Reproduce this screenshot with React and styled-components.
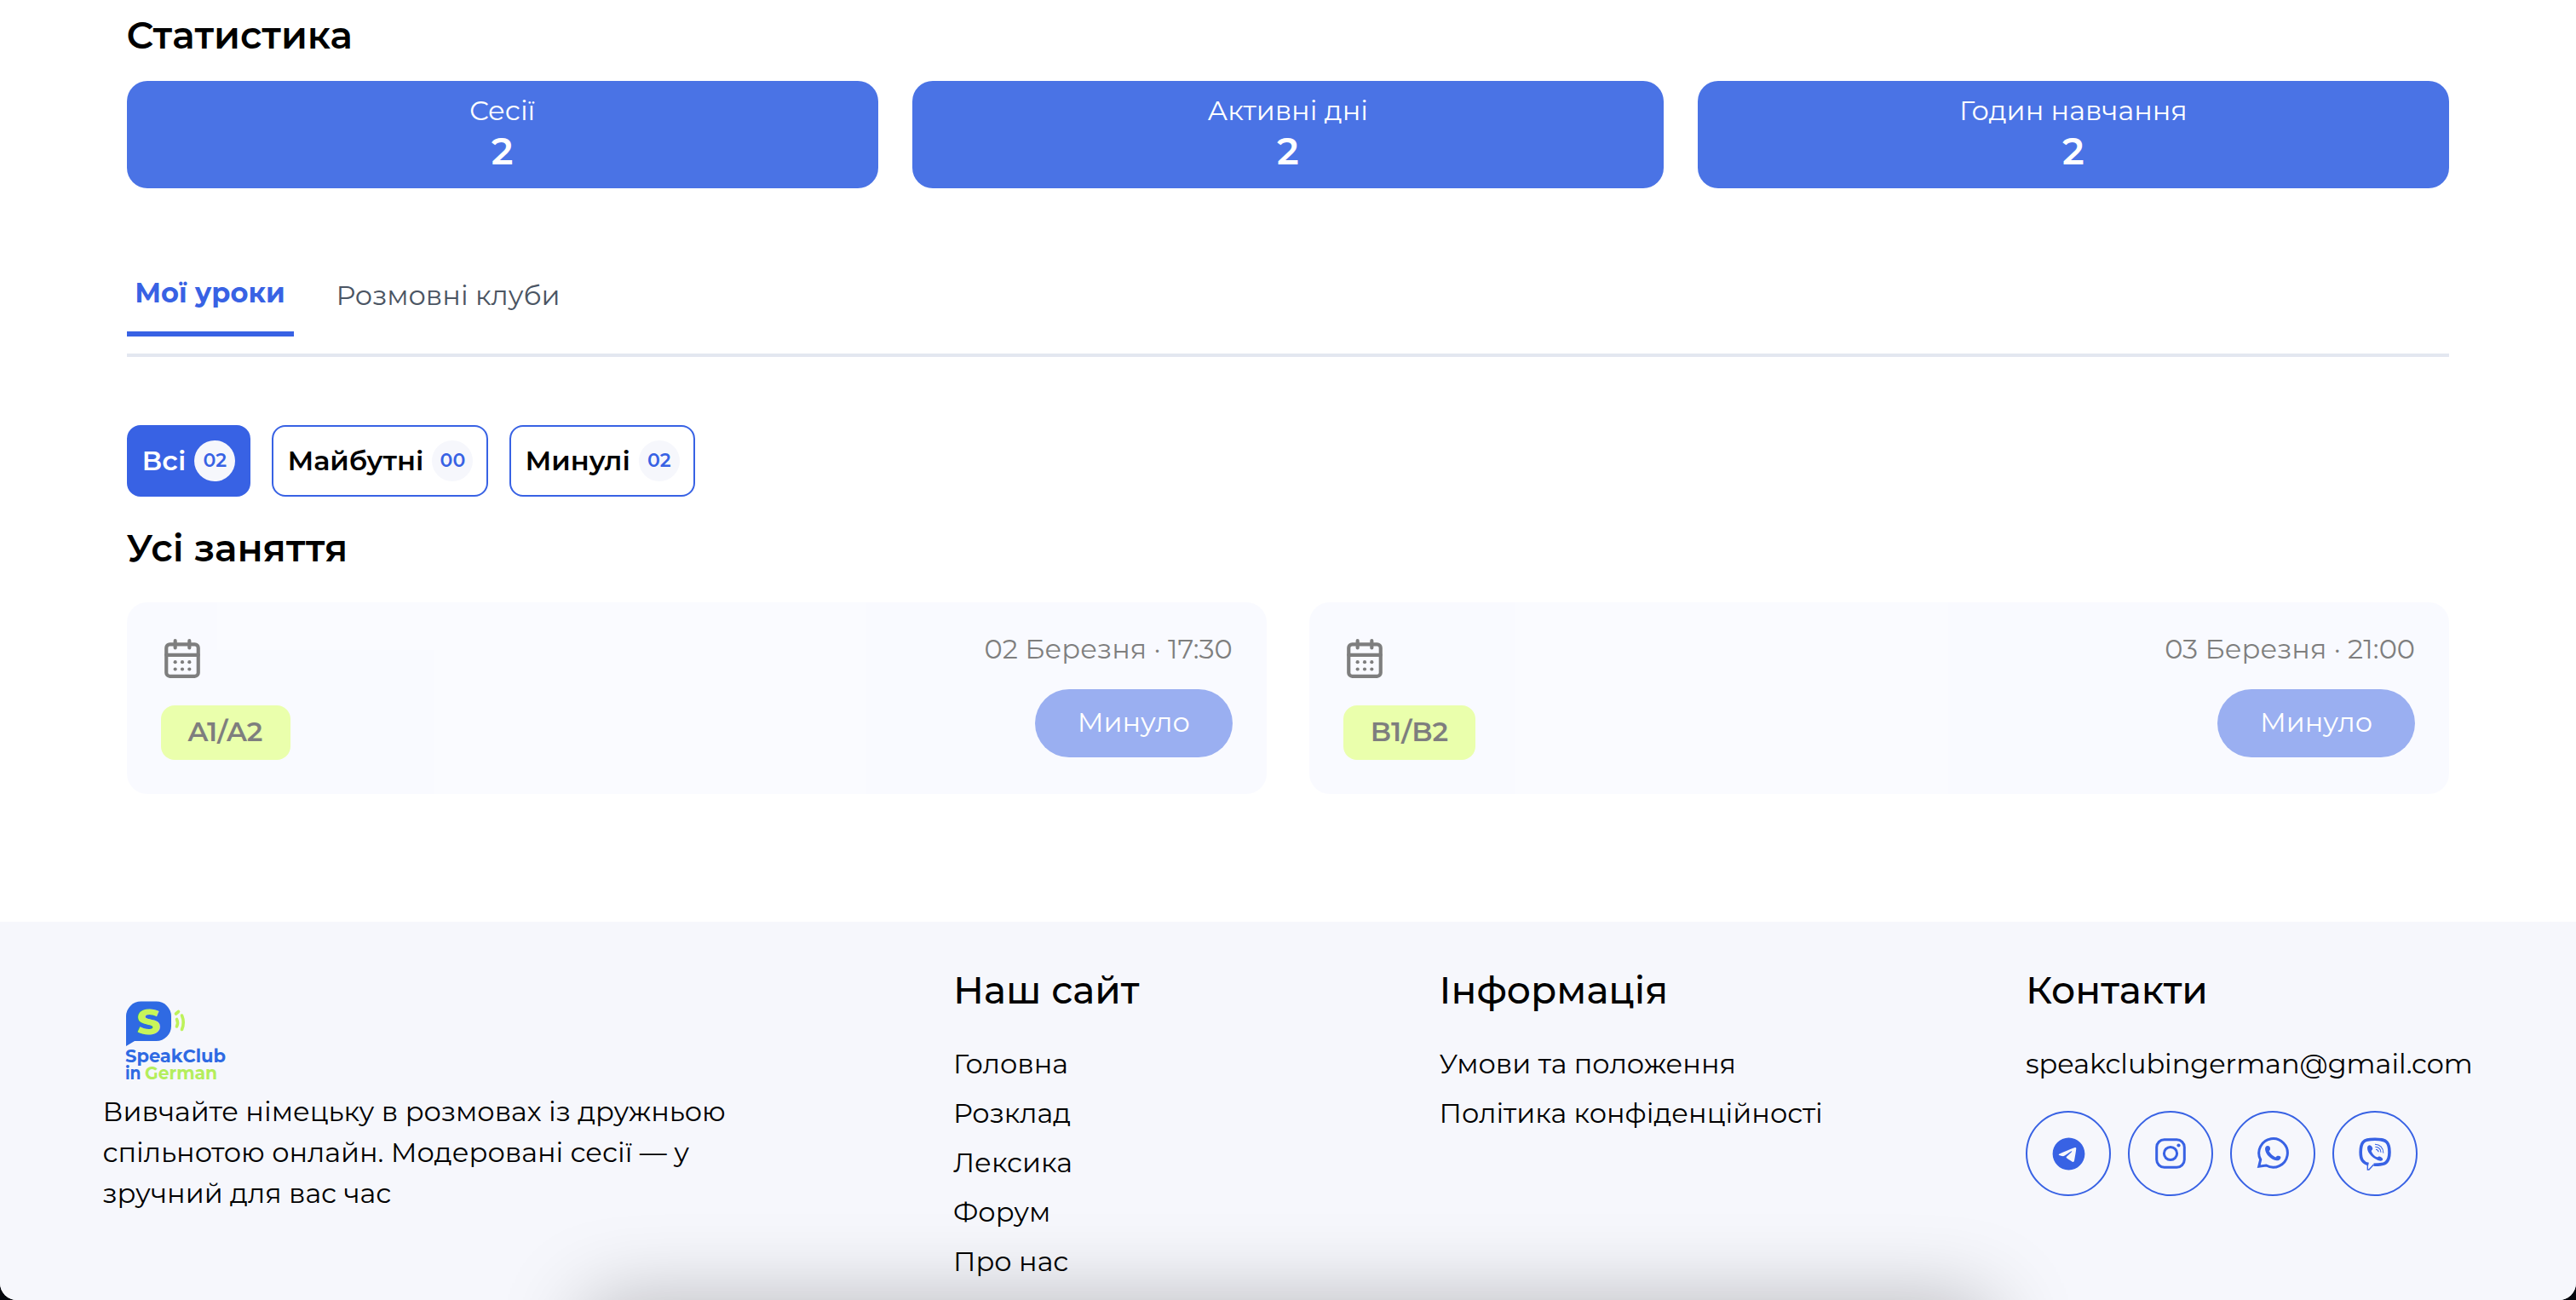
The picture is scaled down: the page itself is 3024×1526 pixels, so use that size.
import React from 'react';
import styled, { createGlobalStyle } from 'styled-components';
import { FaTelegram } from 'react-icons/fa6';

const GlobalStyle = createGlobalStyle`
  * {
    box-sizing: border-box;
    margin: 0;
    padding: 0;
  }
  body {
    background: #05070d;
    font-family: Montserrat, Inter, 'Noto Sans', sans-serif;
    font-size: 32px;
    color: #000;
    overflow: hidden;
  }
  ul {
    list-style: none;
  }
  a {
    color: inherit;
    text-decoration: none;
  }
  button {
    font: inherit;
    color: inherit;
    background: none;
    border: none;
  }
`;

const Page = styled.div`
  height: 1526px;
  display: flex;
  flex-direction: column;
  background: #fff;
  border-radius: 0 0 20px 20px;
  overflow: hidden;
  position: relative;
`;

const Main = styled.main`
  height: 1082px;
  flex-shrink: 0;
  padding: 13px 149px 0 148.5px;
`;

const Title = styled.h2`
  font-size: 44px;
  font-weight: 600;
  line-height: 56px;
`;

const Stats = styled.div`
  display: grid;
  grid-template-columns: repeat(3, 1fr);
  gap: 40px;
  margin-top: 26px;
`;

const StatCard = styled.div`
  height: 126px;
  padding-top: 12px;
  border-radius: 24px;
  background: #4a73e5;
  color: #fff;
  text-align: center;
  p {
    line-height: 46px;
  }
  strong {
    display: block;
    font-size: 44px;
    font-weight: 600;
    line-height: 49px;
  }
`;

const Tabs = styled.div`
  display: flex;
  align-items: flex-start;
  height: 120px;
  margin-top: 78px;
  border-bottom: 4px solid #e3e7f0;
`;

const Tab = styled.button`
  height: ${({ $active }) => ($active ? 96 : 100)}px;
  width: ${({ $active }) => ($active ? '196px' : 'auto')};
  margin-right: 50px;
  padding-top: ${({ $active }) => ($active ? 22 : 25)}px;
  display: flex;
  align-items: flex-start;
  justify-content: center;
  line-height: 46px;
  white-space: nowrap;
  font-weight: ${({ $active }) => ($active ? 700 : 400)};
  color: ${({ $active }) => ($active ? '#3862e4' : '#4b5563')};
  border-bottom: ${({ $active }) => ($active ? '6px solid #3862e4' : 'none')};
`;

const Filters = styled.div`
  display: flex;
  gap: 25px;
  margin: 80px 0 32px;
`;

const Filter = styled.button`
  height: 84px;
  padding: 0 16px;
  display: flex;
  align-items: center;
  gap: 10px;
  border: 2px solid #3862e4;
  border-radius: 16px;
  font-weight: 600;
  line-height: 46px;
  background: ${({ $active }) => ($active ? '#3862e4' : '#fff')};
  color: ${({ $active }) => ($active ? '#fff' : '#000')};
`;

const Count = styled.span`
  width: 48px;
  height: 48px;
  border-radius: 50%;
  display: flex;
  align-items: center;
  justify-content: center;
  font-size: 22px;
  font-weight: 600;
  background: #f6f7fc;
  color: #3862e4;
`;

const Lessons = styled.div`
  display: grid;
  grid-template-columns: repeat(2, 1fr);
  gap: 50px;
  margin-top: 36px;
`;

const LessonCard = styled.article`
  height: 225px;
  padding: 40px;
  display: flex;
  justify-content: space-between;
  border-radius: 24px;
  background: #f5f7ff;
  opacity: 0.5;
`;

const LessonLeft = styled.div`
  display: flex;
  flex-direction: column;
  align-items: flex-start;
  svg {
    display: block;
    margin: 1px 0 30px;
  }
`;

const LessonRight = styled.div`
  display: flex;
  flex-direction: column;
  align-items: flex-end;
  gap: 32px;
  time {
    line-height: 30px;
  }
`;

const Level = styled.span`
  height: 64px;
  padding: 0 32px 3px;
  display: flex;
  align-items: center;
  border-radius: 16px;
  background: #d6ff5b;
  font-weight: 600;
`;

const PastButton = styled.button`
  width: 232px;
  height: 80px;
  padding-bottom: 3px;
  border-radius: 40px;
  background: #3862e4;
  color: #fff;
`;

const Footer = styled.footer`
  flex: 1;
  padding: 54px 0 0 120.5px;
  display: flex;
  align-items: flex-start;
  background: #f6f7fc;
`;

const FooterColumn = styled.div`
  width: ${({ $width }) => $width}px;
  flex-shrink: 0;
  h3 {
    font-size: 44px;
    font-weight: 500;
    line-height: 52px;
    margin-bottom: 32px;
  }
  li {
    line-height: 58px;
    white-space: nowrap;
  }
`;

const Brand = styled.div`
  width: 998.5px;
  flex-shrink: 0;
  padding-top: 37px;
  svg {
    display: block;
    margin-left: 25.5px;
  }
  p {
    width: 760px;
    margin-top: 8px;
    line-height: 48px;
  }
`;

const Socials = styled.div`
  display: flex;
  gap: 20px;
  margin-top: 26px;
`;

const SocialLink = styled.a`
  width: 100px;
  height: 100px;
  display: flex;
  align-items: center;
  justify-content: center;
  border: 2px solid #3862e4;
  border-radius: 50%;
  color: #3862e4;
`;

const DockShadow = styled.div`
  position: absolute;
  left: 690px;
  right: 690px;
  top: 1530px;
  height: 120px;
  box-shadow: 0 0 100px rgba(0, 0, 0, 0.28);
`;

const CalendarIcon = () => (
  <svg width="50" height="50" viewBox="0 0 24 24" fill="none" stroke="#000" strokeWidth="2">
    <rect x="3" y="4" width="18" height="18" rx="2" />
    <path d="M3 10h18M8 2v4M16 2v4" strokeLinecap="round" />
    <g fill="#000" stroke="none">
      <circle cx="8" cy="14" r="1" />
      <circle cx="12" cy="14" r="1" />
      <circle cx="16" cy="14" r="1" />
      <circle cx="8" cy="18" r="1" />
      <circle cx="12" cy="18" r="1" />
      <circle cx="16" cy="18" r="1" />
    </g>
  </svg>
);

const Logo = () => (
  <svg width="130" height="100" viewBox="0 0 130 100" overflow="visible" fontFamily="Montserrat, Inter, sans-serif">
    <path
      d="M2 20A17.500 17.500 0 0 1 19.500 2.500H37.500A17.500 17.500 0 0 1 55 20V31.500A17.500 17.500 0 0 1 37.500 49H12L2 55Z"
      fill="#2f6ae3"
    />
    <text x="14.500" y="41" fontSize="42" fontWeight="800" fill="#c8f55a" textLength="28" lengthAdjust="spacingAndGlyphs">S</text>
    <path d="M60.500 17 63.500 14.500M61.500 23.500Q63.500 27.500 61.500 32M67.500 19Q71 27.500 67.500 35.500" fill="none" stroke="#bdf25a" strokeWidth="3.600" strokeLinecap="round" />
    <text x="1" y="74" fontSize="22" fontWeight="700" fill="#2f6ae3" textLength="118" lengthAdjust="spacingAndGlyphs">SpeakClub</text>
    <text x="1" y="94" fontSize="22" fontWeight="700" fill="#2f6ae3" textLength="18.500" lengthAdjust="spacingAndGlyphs">in</text>
    <text x="24" y="94" fontSize="22" fontWeight="700" fill="#b4ee5c" textLength="85" lengthAdjust="spacingAndGlyphs">German</text>
  </svg>
);

const InstagramIcon = () => (
  <svg width="40" height="40" viewBox="0 0 40 40" fill="none" stroke="currentColor" strokeWidth="3">
    <rect x="3.700" y="3.700" width="32.600" height="32.600" rx="9" />
    <circle cx="20" cy="20" r="7.600" />
    <circle cx="29.500" cy="10.500" r="2.100" fill="currentColor" stroke="none" />
  </svg>
);

const WhatsappIcon = () => (
  <svg width="40" height="40" viewBox="0 0 40 40">
    <path
      d="M3.700 35.300 5.700 27.200A16.800 16.800 0 1 1 12.300 34Z"
      fill="none"
      stroke="currentColor"
      strokeWidth="3"
    />
    <path
      d="M11 15C11 12.500 12.300 11 14 11C15.700 11 17 12.200 17 14.200C17 15.500 16.600 16.300 15.600 17.300C17.500 20.500 20 23 23.300 24.400C24.500 23 25.500 22.500 27 22.800L28.500 23.300C29.600 23.800 29.600 24.800 29.100 25.900C28.300 27.700 26.500 28.400 24.500 28.200C18 27.500 11.500 21 11 15Z"
      fill="currentColor"
    />
  </svg>
);

const ViberIcon = () => (
  <svg width="40" height="40" viewBox="0 0 40 40" fill="none" stroke="currentColor">
    <path
      d="M12.500 32.600C5.500 31 3.200 27 3.200 18.500C3.200 13 3.800 9.500 6 6.800C8.500 3.800 12 3.300 20 3.300C28 3.300 31.500 3.800 34 6.800C36.300 9.500 37 13 37 18.500C37 24 36 28 33 30.600C30.500 32.800 26.500 33.300 18.500 33.300"
      strokeWidth="3.600"
    />
    <path d="M11.300 31.500V39H13L18.500 33" strokeWidth="1.300" />
    <path
      d="M11 13.500C11.200 11.200 12.800 10 14.400 10.400C16 11 17.600 13.200 17.200 14.800C17 15.800 16 16.400 15.800 17.200C16.800 20.500 19.500 23.200 22.300 24.200C23.500 24.500 24 23.200 25.400 23.500C27 24 29 25.300 29.200 26.600C29.300 28 27.800 29 26.300 28.700C19 27.200 11 20 11 13.500Z"
      fill="currentColor"
      stroke="none"
    />
    <path d="M20 9.300C26 9.500 29.800 13.500 29.800 19.500M20.300 12.300C24.500 12.500 26.800 15 27 18.800M21 15.300C23 15.500 24 16.500 24.200 18.300" strokeWidth="1.100" />
  </svg>
);

const stats = [
  { label: 'Сесії', value: 2 },
  { label: 'Активні дні', value: 2 },
  { label: 'Годин навчання', value: 2 },
];

const filters = [
  { label: 'Всі', count: '02', active: true },
  { label: 'Майбутні', count: '00' },
  { label: 'Минулі', count: '02' },
];

const lessons = [
  { level: 'A1/A2', date: '02 Березня · 17:30' },
  { level: 'B1/B2', date: '03 Березня · 21:00' },
];

const siteLinks = ['Головна', 'Розклад', 'Лексика', 'Форум', 'Про нас'];
const infoLinks = ['Умови та положення', 'Політика конфіденційності'];
const contactLinks = ['speakclubingerman@gmail.com'];

const LinkList = ({ items }) => (
  <ul>
    {items.map((text) => (
      <li key={text}>
        <a href="#">{text}</a>
      </li>
    ))}
  </ul>
);

export default function App() {
  return (
    <>
      <GlobalStyle />
      <Page>
        <Main>
          <Title>Статистика</Title>
          <Stats>
            {stats.map(({ label, value }) => (
              <StatCard key={label}>
                <p>{label}</p>
                <strong>{value}</strong>
              </StatCard>
            ))}
          </Stats>
          <Tabs>
            <Tab $active>Мої уроки</Tab>
            <Tab>Розмовні клуби</Tab>
          </Tabs>
          <Filters>
            {filters.map(({ label, count, active }) => (
              <Filter key={label} $active={active}>
                {label}
                <Count>{count}</Count>
              </Filter>
            ))}
          </Filters>
          <Title>Усі заняття</Title>
          <Lessons>
            {lessons.map(({ level, date }) => (
              <LessonCard key={date}>
                <LessonLeft>
                  <CalendarIcon />
                  <Level>{level}</Level>
                </LessonLeft>
                <LessonRight>
                  <time>{date}</time>
                  <PastButton>Минуло</PastButton>
                </LessonRight>
              </LessonCard>
            ))}
          </Lessons>
        </Main>
        <Footer>
          <Brand>
            <Logo />
            <p>
              Вивчайте німецьку в розмовах із дружньою спільнотою онлайн.
              Модеровані сесії — у зручний для вас час
            </p>
          </Brand>
          <FooterColumn $width={570.5}>
            <h3>Наш сайт</h3>
            <LinkList items={siteLinks} />
          </FooterColumn>
          <FooterColumn $width={688.5}>
            <h3>Інформація</h3>
            <LinkList items={infoLinks} />
          </FooterColumn>
          <FooterColumn $width={560}>
            <h3>Контакти</h3>
            <LinkList items={contactLinks} />
            <Socials>
              <SocialLink href="#">
                <FaTelegram size={39} />
              </SocialLink>
              <SocialLink href="#">
                <InstagramIcon />
              </SocialLink>
              <SocialLink href="#">
                <WhatsappIcon />
              </SocialLink>
              <SocialLink href="#">
                <ViberIcon />
              </SocialLink>
            </Socials>
          </FooterColumn>
        </Footer>
        <DockShadow />
      </Page>
    </>
  );
}
